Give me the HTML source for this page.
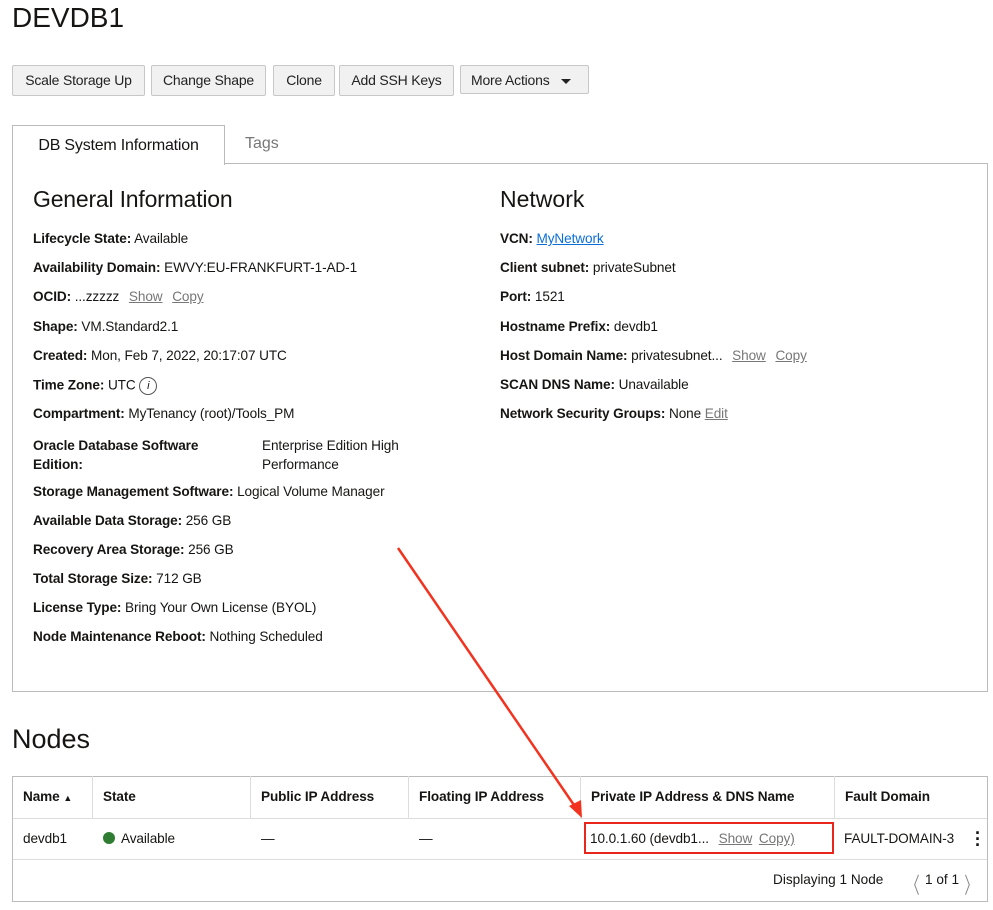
<!DOCTYPE html>
<html><head><style>
body{margin:0;width:993px;height:910px;background:#fff;font-family:"Liberation Sans",sans-serif;color:#161513;position:relative;overflow:hidden}
.a{position:absolute;white-space:nowrap}
.btn{position:absolute;top:65px;height:29px;border:1px solid #c7c7c7;background:#f1f1f1;border-radius:2px;font-size:14px;line-height:29px;text-align:center;color:#222;letter-spacing:-0.2px}
.r{position:absolute;font-size:13.6px;white-space:nowrap;letter-spacing:-0.1px}
.r b{font-weight:bold}
.lk{color:#777;text-decoration:underline;margin-left:6px}
.th{position:absolute;top:776px;height:42px;line-height:42px;font-size:13.6px;font-weight:bold;padding-left:10px;box-sizing:border-box;border-right:1px solid #ddd;letter-spacing:-0.1px}
.td{position:absolute;top:818px;height:42px;line-height:42px;font-size:13.6px;padding-left:10px;box-sizing:border-box;letter-spacing:-0.1px}
</style></head><body>
<div class="a" style="left:12px;top:1px;font-size:28px;line-height:34px">DEVDB1</div>
<div class="btn" style="left:12px;width:131px">Scale Storage Up</div>
<div class="btn" style="left:151px;width:113px">Change Shape</div>
<div class="btn" style="left:273px;width:60px">Clone</div>
<div class="btn" style="left:339px;width:113px">Add SSH Keys</div>
<div class="btn" style="left:460px;width:129px;text-align:left;padding-left:10px;box-sizing:border-box">More Actions <span style="display:inline-block;margin-left:8px;border-left:5px solid transparent;border-right:5px solid transparent;border-top:5px solid #222;vertical-align:middle"></span></div>
<div class="a" style="left:12px;top:163px;width:974px;height:527px;border:1px solid #bbb"></div>
<div class="a" style="left:12px;top:125px;width:211px;height:39px;border:1px solid #bbb;border-bottom:none;background:#fff;font-size:16px;line-height:40px;text-align:center;letter-spacing:-0.2px">DB System Information</div>
<div class="a" style="left:245px;top:135px;font-size:16px;color:#777">Tags</div>
<div class="a" style="left:33px;top:186px;font-size:23px;letter-spacing:-0.2px">General Information</div>
<div class="a" style="left:500px;top:186px;font-size:23px">Network</div>
<div class="r" style="left:33px;top:231px"><b>Lifecycle State:</b> Available</div>
<div class="r" style="left:33px;top:260px"><b>Availability Domain:</b> EWVY:EU-FRANKFURT-1-AD-1</div>
<div class="r" style="left:33px;top:289px"><b>OCID:</b> ...zzzzz <span class="lk">Show</span> <span class="lk">Copy</span></div>
<div class="r" style="left:33px;top:319px"><b>Shape:</b> VM.Standard2.1</div>
<div class="r" style="left:33px;top:348px"><b>Created:</b> Mon, Feb 7, 2022, 20:17:07 UTC</div>
<div class="r" style="left:33px;top:377px"><b>Time Zone:</b> UTC <span style="display:inline-block;width:16px;height:16px;border:1px solid #555;border-radius:50%;text-align:center;font-size:11px;line-height:16px;font-style:italic;vertical-align:middle">i</span></div>
<div class="r" style="left:33px;top:406px"><b>Compartment:</b> MyTenancy (root)/Tools_PM</div>
<div class="r" style="left:33px;top:436px;line-height:19px"><b>Oracle Database Software<br>Edition:</b></div>
<div class="r" style="left:262px;top:436px;line-height:19px">Enterprise Edition High<br>Performance</div>
<div class="r" style="left:33px;top:484px"><b>Storage Management Software:</b> Logical Volume Manager</div>
<div class="r" style="left:33px;top:513px"><b>Available Data Storage:</b> 256 GB</div>
<div class="r" style="left:33px;top:542px"><b>Recovery Area Storage:</b> 256 GB</div>
<div class="r" style="left:33px;top:571px"><b>Total Storage Size:</b> 712 GB</div>
<div class="r" style="left:33px;top:600px"><b>License Type:</b> Bring Your Own License (BYOL)</div>
<div class="r" style="left:33px;top:629px"><b>Node Maintenance Reboot:</b> Nothing Scheduled</div>
<div class="r" style="left:500px;top:231px"><b>VCN:</b> <span style="color:#0b6ed8;text-decoration:underline">MyNetwork</span></div>
<div class="r" style="left:500px;top:260px"><b>Client subnet:</b> privateSubnet</div>
<div class="r" style="left:500px;top:289px"><b>Port:</b> 1521</div>
<div class="r" style="left:500px;top:319px"><b>Hostname Prefix:</b> devdb1</div>
<div class="r" style="left:500px;top:348px"><b>Host Domain Name:</b> privatesubnet... <span class="lk">Show</span> <span class="lk">Copy</span></div>
<div class="r" style="left:500px;top:377px"><b>SCAN DNS Name:</b> Unavailable</div>
<div class="r" style="left:500px;top:406px"><b>Network Security Groups:</b> None <span style="color:#777;text-decoration:underline">Edit</span></div>
<div class="a" style="left:12px;top:724px;font-size:27px">Nodes</div>
<div class="a" style="left:12px;top:776px;width:974px;height:124px;border:1px solid #bbb"></div>
<div class="a" style="left:13px;top:818px;width:974px;border-top:1px solid #ddd"></div>
<div class="a" style="left:13px;top:859px;width:974px;border-top:1px solid #ddd"></div>
<div class="th" style="left:13px;width:80px">Name <span style="font-size:9px">▲</span></div>
<div class="th" style="left:93px;width:158px">State</div>
<div class="th" style="left:251px;width:158px">Public IP Address</div>
<div class="th" style="left:409px;width:172px">Floating IP Address</div>
<div class="th" style="left:581px;width:254px">Private IP Address &amp; DNS Name</div>
<div class="th" style="left:835px;width:150px;border:none">Fault Domain</div>
<div class="td" style="left:13px">devdb1</div>
<div class="td" style="left:93px"><span style="display:inline-block;width:12px;height:12px;border-radius:50%;background:#2e7d32;vertical-align:-1px;margin-right:6px"></span>Available</div>
<div class="td" style="left:251px">—</div>
<div class="td" style="left:409px">—</div>
<div class="td" style="left:581px;padding-left:9px">10.0.1.60 (devdb1... <span class="lk">Show</span> <span class="lk" style="margin-left:3px">Copy)</span></div>
<div class="td" style="left:835px;padding-left:9px">FAULT-DOMAIN-3</div>
<div class="a" style="left:975px;top:830px;font-size:18px;font-weight:bold;line-height:6px">·<br>·<br>·</div>
<div class="a" style="left:584px;top:822px;width:246px;height:28px;border:2px solid #e8261c"></div>
<div class="a" style="left:773px;top:872px;font-size:13.6px">Displaying 1 Node</div>
<div class="a" style="left:902px;top:868px;font-size:22px;color:#888;transform:scaleX(.6)">〈</div>
<div class="a" style="left:925px;top:872px;font-size:13.6px">1 of 1</div>
<div class="a" style="left:960px;top:868px;font-size:22px;color:#888;transform:scaleX(.6)">〉</div>
<svg class="a" style="left:0;top:0" width="993" height="910"><line x1="398" y1="548" x2="576" y2="808" stroke="#f2331f" stroke-width="2.5"/><polygon points="582,818 569,806 581,800" fill="#f2331f"/></svg>
</body></html>
